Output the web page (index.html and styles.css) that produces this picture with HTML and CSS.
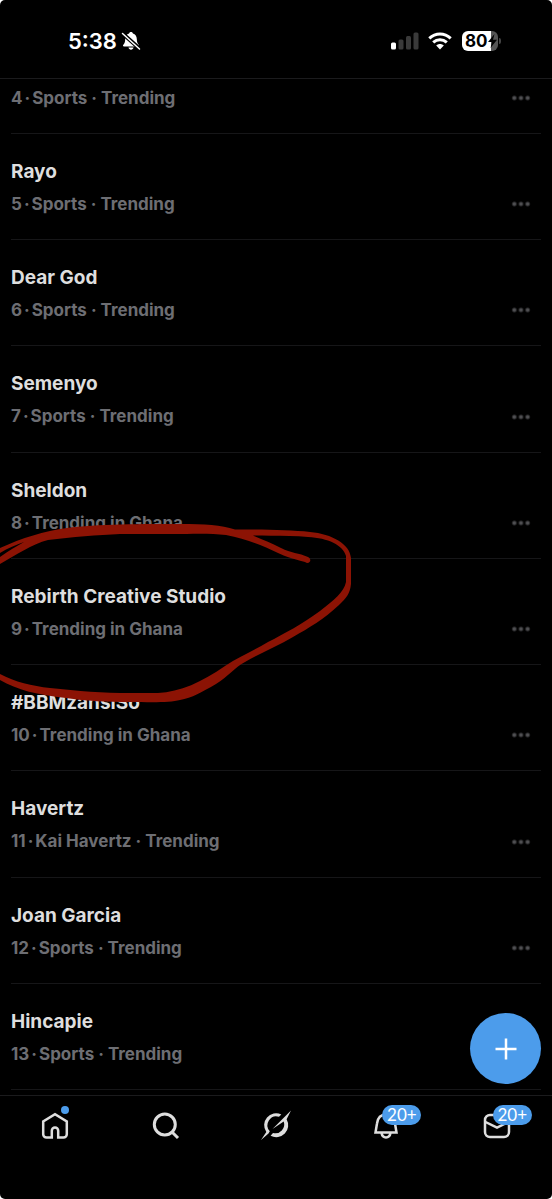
FILE: index.html
```html
<!DOCTYPE html>
<html lang="en">
<head>
<meta charset="utf-8">
<meta name="viewport" content="width=device-width, initial-scale=1">
<title>Trending</title>
<link rel="stylesheet" href="styles.css">
</head>
<body>
<div class="screen">
  <header class="status">
    <div class="status-side">
      <span class="clock">5:38</span>
      <svg class="mute" viewBox="0 0 20 20" aria-label="Silent mode">
        <path fill="#fff" d="M10 1c1 0 1.700.6 1.900 1.400 2.500.8 3.900 2.800 3.900 5.600 0 3.600 1 4.700 1.900 5.700.6.700.3 1.800-.7 1.800H3c-1 0-1.300-1.100-.7-1.800 1-1 1.900-2.100 1.900-5.700 0-2.800 1.400-4.800 3.900-5.600C8.300 1.600 9 1 10 1zM7.500 16.500h5c-.3 1.400-1.200 2.200-2.500 2.200s-2.200-.8-2.500-2.200z"/>
        <path stroke="#000" stroke-width="4" d="M1 2l18 16"/>
        <path stroke="#fff" stroke-width="1.500" stroke-linecap="round" d="M1.500 2.500l17 15.500"/>
      </svg>
    </div>
    <div class="status-side">
      <svg class="signal" viewBox="0 0 28 18" aria-label="Signal">
        <rect x="0" y="10.500" width="5" height="7" rx="1.500" fill="#fff"/>
        <rect x="7.500" y="7.500" width="5" height="10" rx="1.500" fill="#3a3a3a"/>
        <rect x="15" y="4" width="5" height="13.500" rx="1.500" fill="#3a3a3a"/>
        <rect x="22.500" y="0.500" width="5" height="17" rx="1.500" fill="#3a3a3a"/>
      </svg>
      <svg class="wifi" viewBox="0 0 24 18" aria-label="Wi-Fi">
        <g fill="none" stroke="#fff" stroke-width="3">
          <path d="M1.300 6.300C7.500.4 16.500.4 22.700 6.300"/>
          <path d="M5.200 10.400c4-3.700 9.600-3.700 13.600 0"/>
        </g>
        <path fill="#fff" d="M8.200 13.600c2.300-2 5.300-2 7.600 0L12 17.600z"/>
      </svg>
      <div class="battery">
        <span class="battery-level">80</span>
        <svg class="bolt" viewBox="0 0 9 14"><path d="M6.500 0L0 8h4l-1.500 6L9 5.700H5z"/></svg>
      </div>
    </div>
  </header>

  <main class="trends">
    <article class="trend trend-cut"><p class="meta"><span>4</span><span class="dot">·</span>Sports · Trending</p><button class="more" aria-label="More"></button></article>
    <article class="trend"><h2>Rayo</h2><p class="meta"><span>5</span><span class="dot">·</span>Sports · Trending</p><button class="more" aria-label="More"></button></article>
    <article class="trend"><h2>Dear God</h2><p class="meta"><span>6</span><span class="dot">·</span>Sports · Trending</p><button class="more" aria-label="More"></button></article>
    <article class="trend"><h2>Semenyo</h2><p class="meta"><span>7</span><span class="dot">·</span>Sports · Trending</p><button class="more" aria-label="More"></button></article>
    <article class="trend"><h2>Sheldon</h2><p class="meta"><span>8</span><span class="dot">·</span>Trending in Ghana</p><button class="more" aria-label="More"></button></article>
    <article class="trend"><h2>Rebirth Creative Studio</h2><p class="meta"><span>9</span><span class="dot">·</span>Trending in Ghana</p><button class="more" aria-label="More"></button></article>
    <article class="trend"><h2>#BBMzansiSo</h2><p class="meta"><span>10</span><span class="dot">·</span>Trending in Ghana</p><button class="more" aria-label="More"></button></article>
    <article class="trend"><h2>Havertz</h2><p class="meta"><span>11</span><span class="dot">·</span>Kai Havertz · Trending</p><button class="more" aria-label="More"></button></article>
    <article class="trend"><h2>Joan Garcia</h2><p class="meta"><span>12</span><span class="dot">·</span>Sports · Trending</p><button class="more" aria-label="More"></button></article>
    <article class="trend"><h2>Hincapie</h2><p class="meta"><span>13</span><span class="dot">·</span>Sports · Trending</p></article>
    <button class="compose" aria-label="New post">
      <svg viewBox="0 0 22 22"><path d="M11 .5v21M.5 11h21" stroke="#fff" stroke-width="2.500"/></svg>
    </button>
  </main>

  <nav class="tabs">
    <a class="tab" href="#home" aria-label="Home">
      <svg viewBox="0 0 30 30" class="icon"><path d="M11.800 26.500H6.500a3.300 3.300 0 0 1-3.300-3.300V10.500L15 3.300l11.800 7.200v12.700a3.300 3.300 0 0 1-3.300 3.300h-5.300V19.700a3.200 3.200 0 0 0-6.400 0v6.800z"/></svg>
      <span class="unread"></span>
    </a>
    <a class="tab" href="#search" aria-label="Search">
      <svg viewBox="0 0 30 30" class="icon search"><circle cx="13.800" cy="13.500" r="10.500"/><path d="M21 21l6 6"/></svg>
    </a>
    <a class="tab" href="#grok" aria-label="Grok">
      <svg viewBox="0 0 34 34" class="icon grok"><path d="M22.300 6.500A11.900 11.900 0 0 0 7.300 24L2 32 9.500 25.500 10.800 23.300A8.900 8.900 0 0 1 20 8.800zM11.600 27.700A11.900 11.900 0 0 0 27.600 11.300L32 2.500 13.500 21 24.700 13.500A8.900 8.900 0 0 1 14 25z"/></svg>
    </a>
    <a class="tab" href="#notifications" aria-label="Notifications">
      <svg viewBox="0 0 30 30" class="icon"><path d="M4.500 21.500h21l-1.500-9C23.300 7 20 3.500 15 3.500S6.700 7 6 12.500zM10.500 22c.5 2.800 2.300 4.400 4.500 4.400s4-1.600 4.500-4.400"/></svg>
      <span class="badge">20+</span>
    </a>
    <a class="tab" href="#messages" aria-label="Messages">
      <svg viewBox="0 0 30 30" class="icon"><rect x="3" y="4" width="24" height="22" rx="5"/><path d="M3.500 11L15 16.700 26.500 11"/></svg>
      <span class="badge">20+</span>
    </a>
  </nav>

  <svg class="marker" viewBox="0 0 552 210" aria-hidden="true">
    <path d="M-4 50L0 48C22 38 44 31 67 28C95 24 145 24 180 24C205 24 221 25 235 29.500C262 29.500 290 30 310 32C332 34 350 44 351 58V84C350 94 346 98 339 105C324 119 309 128 293 137C278 146 258 154 245 162C234 168 229 176 216 184C202 192 192 198 180 200C170 203 148 202 130 202C106 202 86 201 66 198C38 195 17 190 0 180L-4 178V170L0 174C15 182 32 186 50 188C78 191 103 193 130 193H158C180 192 202 182 225 166C240 156 255 150 268 142C284 134 302 124 320 111C334 100 344 92 346 82V56C343 45 328 38 308 37C290 35 270 36 253 35.500C263 40 272 43 281 48C291 53 299 53 308 57C313 60 309 65 305 62C291 58 286 57 278 53C262 45 246 39 226 35C210 33 190 34 174 34H120C98 35 72 37 48 40C32 44 16 55 0 64L-4 66V60L0 57C8 51 17 46 24 42C16 45 8 48 0 53L-4 55Z"/>
  </svg>
</div>
</body>
</html>
```
FILE: styles.css
```css
* { box-sizing: border-box; }

body {
  margin: 0;
  background: #fff;
  color: #dedede;
  font-family: Inter, "Noto Sans", sans-serif;
}

.screen {
  position: relative;
  display: flex;
  flex-direction: column;
  min-height: 100vh;
  background: #000;
  border-radius: 5px;
}

.status {
  display: flex;
  justify-content: space-between;
  height: 79px;
  padding: 28px 51px 24px 68px;
  border-bottom: 1px solid #1b1b1d;
}

.status-side {
  display: flex;
  align-items: center;
  color: #fff;
}

.clock {
  font-size: 22px;
  line-height: 26px;
  font-weight: 600;
}

.mute { width: 20px; height: 20px; margin-left: 4px; }
.signal { width: 28px; height: 18px; margin-right: 9px; }
.wifi { width: 24px; height: 18px; margin-right: 10px; }

.battery {
  position: relative;
  display: flex;
  align-items: center;
  width: 36px;
  height: 20px;
  padding-left: 3px;
  border-radius: 6px;
  background: linear-gradient(90deg, #fff 80%, #555 80%);
  color: #000;
  margin-right: 3px;
}

.battery::after {
  content: "";
  position: absolute;
  right: -3px;
  width: 2px;
  height: 6px;
  border-radius: 0 2px 2px 0;
  background: #444;
}

.battery-level {
  font-size: 17px;
  line-height: 20px;
  font-weight: 700;
}

.bolt { width: 9px; height: 14px; }

.trends {
  position: relative;
  flex: 1;
  display: flex;
  flex-direction: column;
  padding: 0 11px 5px;
}

.trend {
  position: relative;
  flex: 1;
  padding-top: 25px;
  border-bottom: 1px solid #161618;
}

.trend-cut {
  flex: none;
  height: 55px;
  padding-top: 6px;
}

h2 {
  margin: 0 0 6px;
  font-size: 19px;
  line-height: 26px;
  font-weight: 700;
}

.meta {
  margin: 0;
  color: #6d6e73;
  font-size: 17px;
  line-height: 26px;
  font-weight: 700;
}

.dot { margin: 0 2px; }

.more {
  position: absolute;
  right: 10px;
  bottom: 26px;
  width: 20px;
  height: 18px;
  padding: 0;
  border: 0;
  background: radial-gradient(circle, #505053 1px, transparent 3px) 0 0 / 33.33% 100%;
}

.compose {
  position: absolute;
  right: 11px;
  bottom: 11px;
  display: grid;
  place-items: center;
  width: 71px;
  height: 71px;
  padding: 0;
  border: 0;
  border-radius: 50%;
  background: #4c9ceb;
}

.compose svg { width: 22px; height: 22px; }

.tabs {
  display: grid;
  grid-template-columns: repeat(5, 1fr);
  height: 104px;
  padding-top: 15px;
  border-top: 1px solid #1b1b1d;
}

.tab {
  position: relative;
  display: flex;
  justify-content: center;
  align-items: flex-start;
}

.icon {
  width: 30px;
  height: 30px;
  fill: none;
  stroke: #dedede;
  stroke-width: 2.5;
}

.search { stroke-width: 3; }

.grok {
  width: 34px;
  height: 34px;
  margin-top: -3px;
  fill: #dedede;
  stroke: none;
}

.unread {
  position: absolute;
  left: calc(50% + 6px);
  top: -5px;
  width: 8px;
  height: 8px;
  border-radius: 50%;
  background: #4c9ceb;
}

.badge {
  position: absolute;
  left: calc(50% - 4px);
  top: -6px;
  width: 39px;
  height: 20px;
  border-radius: 10px;
  background: #4c9ceb;
  color: #fff;
  font: 400 17px/20px Lato, sans-serif;
  text-align: center;
}

.marker {
  position: absolute;
  left: 0;
  top: 500px;
  width: 552px;
  height: 210px;
  overflow: hidden;
  fill: #8c1304;
  pointer-events: none;
}
```
